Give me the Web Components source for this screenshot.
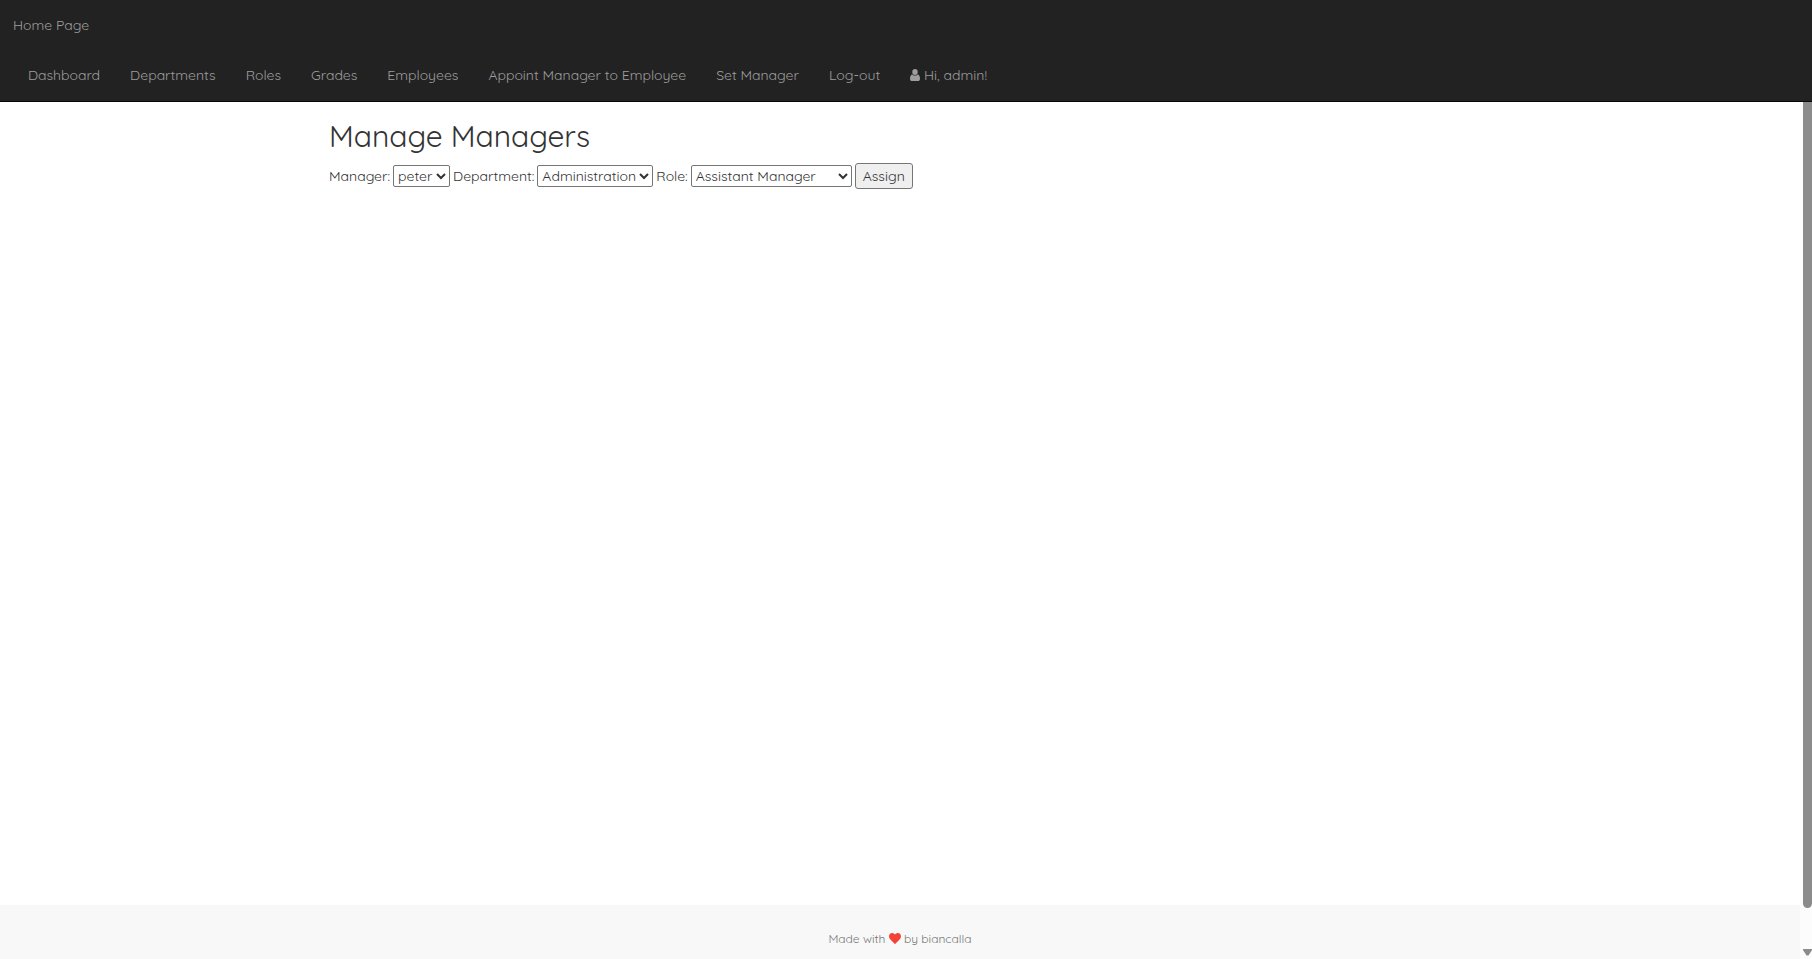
<!DOCTYPE html>
<html lang="en">
<head>
<meta charset="utf-8">
<meta name="viewport" content="width=device-width, initial-scale=1">
<title>Manage Managers</title>
<style>
  body {
    margin: 0;
    font: 400 14px/20px Quicksand, Lato, sans-serif;
    color: #333;
    background: #fff;
  }
</style>
</head>
<body>
<app-shell>
  <site-nav slot="nav">
    <a slot="brand" href="#home">Home Page</a>
    <nav-item href="#dashboard">Dashboard</nav-item>
    <nav-item href="#departments">Departments</nav-item>
    <nav-item href="#roles">Roles</nav-item>
    <nav-item href="#grades">Grades</nav-item>
    <nav-item href="#employees">Employees</nav-item>
    <nav-item href="#appoint">Appoint Manager to Employee</nav-item>
    <nav-item href="#set-manager">Set Manager</nav-item>
    <nav-item href="#logout">Log-out</nav-item>
    <nav-item href="#profile"><user-icon></user-icon> Hi, admin!</nav-item>
  </site-nav>
  <manager-form></manager-form>
  <site-footer slot="footer"></site-footer>
</app-shell>

<script>
const define = (name, html, setup) => {
  const template = document.createElement('template');
  template.innerHTML = html;
  customElements.define(name, class extends HTMLElement {
    constructor() {
      super();
      this.attachShadow({ mode: 'open' }).append(template.content.cloneNode(true));
    }
    connectedCallback() {
      if (setup) setup(this, this.shadowRoot);
    }
  });
};

define('user-icon', `
  <style>
    :host { display: inline-block; width: 10px; height: 12px; vertical-align: -1px; }
    svg { display: block; width: 100%; height: 100%; fill: currentColor; }
  </style>
  <svg viewBox="0 0 11 12" preserveAspectRatio="none" aria-hidden="true">
    <circle cx="5.500" cy="3" r="3"/>
    <path d="M2.700 5.400C1 5.500 0 7.200 0 9.700 0 11.100.9 12 2.200 12h6.600c1.300 0 2.200-.9 2.200-2.300 0-2.500-1-4.200-2.700-4.300C7.600 6.200 6.600 6.600 5.500 6.600S3.400 6.200 2.700 5.400z"/>
  </svg>`);

define('heart-icon', `
  <style>
    :host { display: inline-block; width: 12px; height: 11px; vertical-align: -1px; color: #f44336; }
    svg { display: block; width: 100%; height: 100%; fill: currentColor; }
  </style>
  <svg viewBox="0 0 13 11" preserveAspectRatio="none" aria-hidden="true">
    <path d="M6.500 11c-.2 0-.3-.1-.4-.2L1.500 6.400C1.400 6.300 0 5 0 3.500 0 1.300 1.300 0 3.500 0 4.800 0 6 1 6.500 1.600 7 1 8.200 0 9.500 0 11.700 0 13 1.300 13 3.500c0 1.500-1.400 2.800-1.500 2.900l-4.600 4.400c-.1.100-.2.200-.4.200z"/>
  </svg>`);

define('nav-item', `
  <style>
    :host { display: block; }
    a { display: block; padding: 15px; color: #9d9d9d; text-decoration: none; white-space: nowrap; }
    a:hover { color: #fff; }
  </style>
  <a><slot></slot></a>`,
  (host, root) => { root.querySelector('a').href = host.getAttribute('href'); });

define('site-nav', `
  <style>
    :host { display: block; background: #222; border-bottom: 1px solid #080808; padding-bottom: 1px; }
    .brand { display: flex; padding: 15px 13px; }
    ::slotted(a) { color: #9d9d9d; text-decoration: none; }
    nav { display: flex; flex-wrap: wrap; padding-left: 13px; }
  </style>
  <div class="brand"><slot name="brand"></slot></div>
  <nav aria-label="Main"><slot></slot></nav>`);

define('manager-form', `
  <style>
    :host { display: block; box-sizing: border-box; max-width: 1170px; margin: 0 auto; padding: 18px 14px; }
    h2 { margin: 0 0 10px; font-size: 30px; line-height: 33px; font-weight: 400; }
    form { display: flex; flex-wrap: wrap; align-items: center; gap: 3px; }
    select, button { font: inherit; color: inherit; box-sizing: border-box; margin: 0; }
    select { height: 22px; padding: 0; border: 1px solid #767676; border-radius: 2px; background: #fff; }
    #manager { width: 57px; }
    #department { width: 116px; }
    #role { width: 161px; }
    button { height: 26px; padding: 1px 7px; border: 1px solid #767676; border-radius: 3px; background: #efefef; }
  </style>
  <h2>Manage Managers</h2>
  <form>
    <label for="manager">Manager:</label>
    <select id="manager"><option>peter</option></select>
    <label for="department">Department:</label>
    <select id="department"><option>Administration</option></select>
    <label for="role">Role:</label>
    <select id="role"><option>Assistant Manager</option></select>
    <button type="button">Assign</button>
  </form>`);

define('site-footer', `
  <style>
    :host { display: block; padding: 24px 15px 10px; background: #f8f8f8; color: #777; font-size: 12px; text-align: center; }
    p { margin: 0; }
  </style>
  <p>Made with <heart-icon></heart-icon> by biancalla</p>`);

define('scroll-rail', `
  <style>
    :host { display: flex; flex-direction: column; justify-content: space-between; width: 12px; box-sizing: border-box; padding: 0 0 3px 3px; background: #fcfcfc; }
    .thumb { flex: 1; margin-bottom: 41px; background: #8b8b8b; border-radius: 0 0 5px 5px; }
    svg { display: block; width: 9px; height: 7px; fill: #8b8b8b; }
  </style>
  <div class="thumb"></div>
  <svg viewBox="0 0 9 7" aria-hidden="true"><path d="M0 0h9v1L5.500 6.500h-2L0 1z"/></svg>`);

define('app-shell', `
  <style>
    :host { display: flex; flex-direction: column; min-height: 100vh; }
    .body { flex: 1; display: flex; }
    .page { flex: 1; min-width: 0; display: flex; flex-direction: column; }
    main { flex: 1; }
  </style>
  <slot name="nav"></slot>
  <div class="body">
    <div class="page">
      <main><slot></slot></main>
      <slot name="footer"></slot>
    </div>
    <scroll-rail></scroll-rail>
  </div>`);
</script>
</body>
</html>
